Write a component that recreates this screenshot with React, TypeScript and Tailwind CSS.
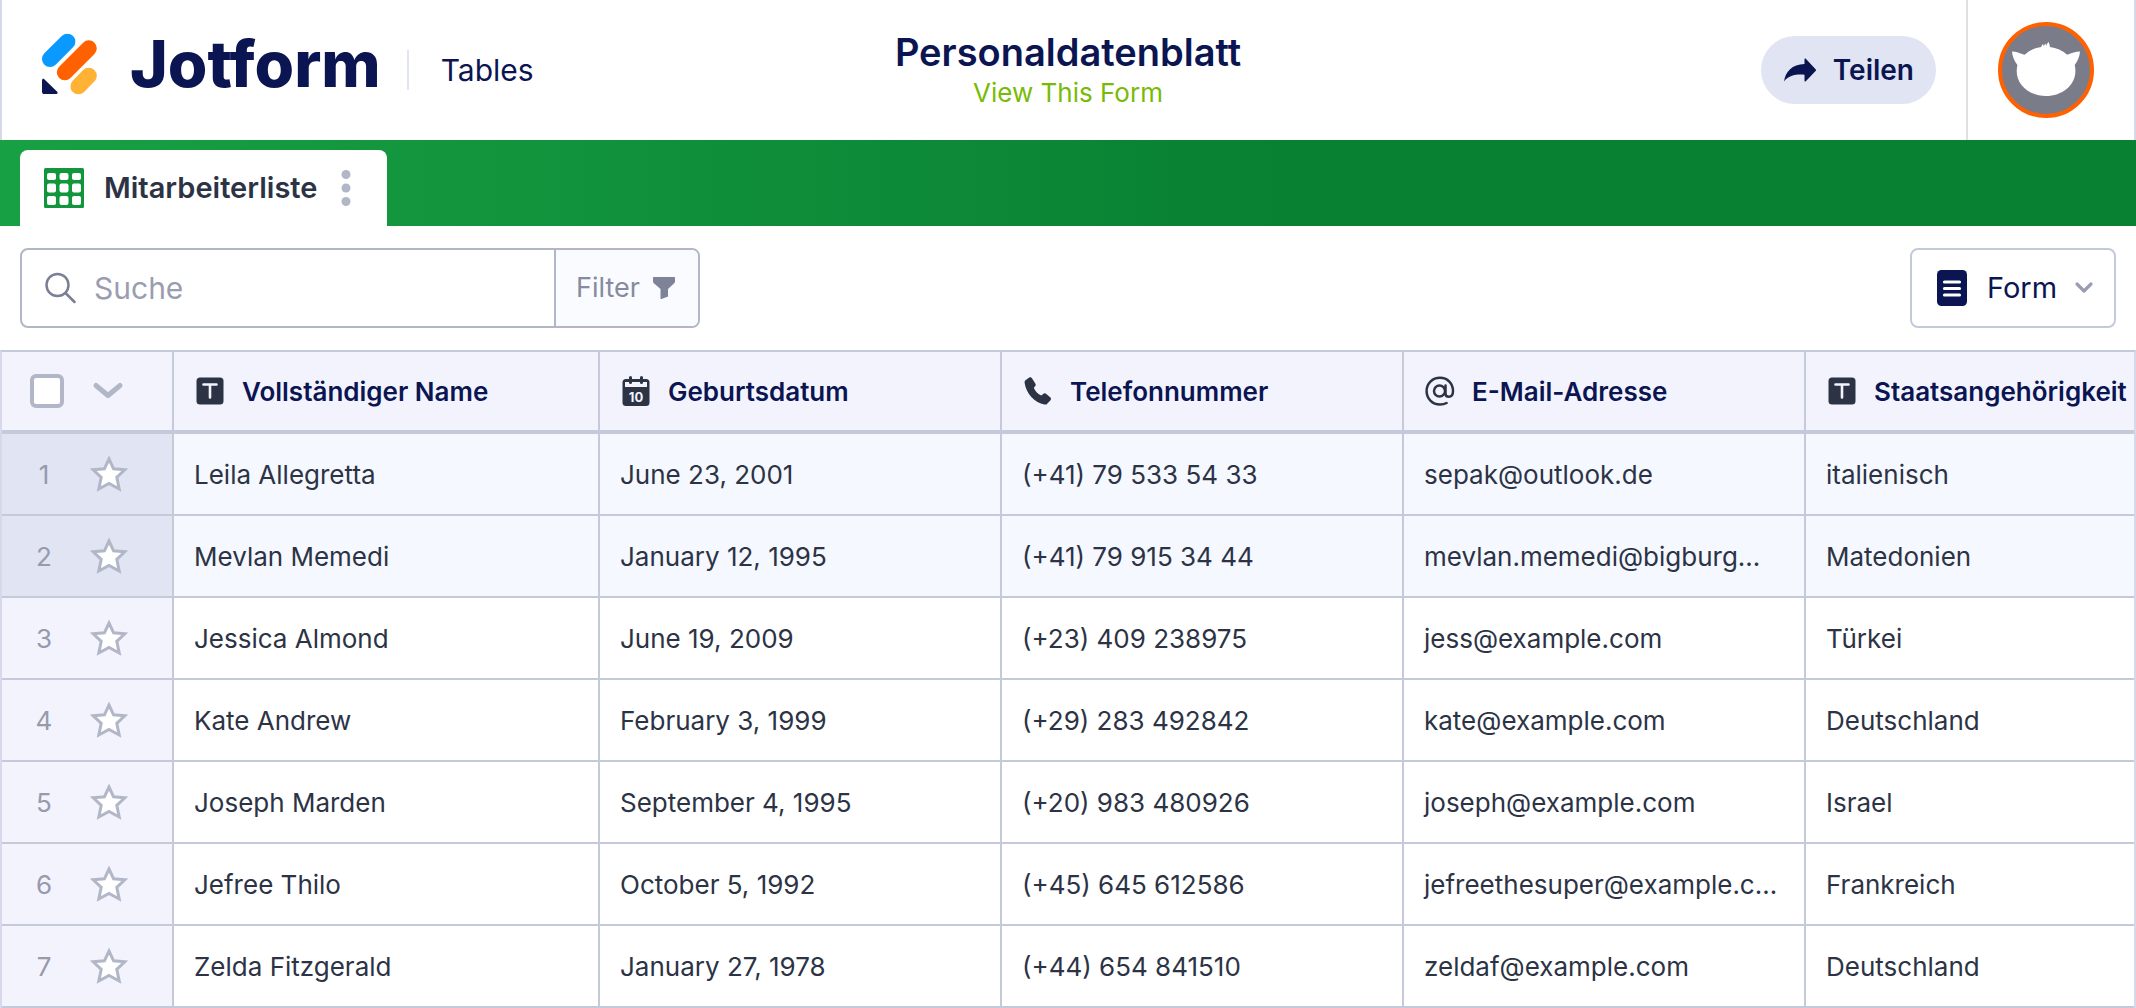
import type { ReactNode } from "react";

const columns = [
  { title: "Vollständiger Name", icon: <TextIcon />, width: "w-[426px]" },
  { title: "Geburtsdatum", icon: <CalendarIcon />, width: "w-[402px]" },
  { title: "Telefonnummer", icon: <PhoneIcon />, width: "w-[402px]" },
  { title: "E-Mail-Adresse", icon: <AtIcon />, width: "w-[402px]" },
  { title: "Staatsangehörigkeit", icon: <TextIcon />, width: "" },
];

const rows = [
  ["Leila Allegretta", "June 23, 2001", "(+41) 79 533 54 33", "sepak@outlook.de", "italienisch"],
  ["Mevlan Memedi", "January 12, 1995", "(+41) 79 915 34 44", "mevlan.memedi@bigburg…", "Matedonien"],
  ["Jessica Almond", "June 19, 2009", "(+23) 409 238975", "jess@example.com", "Türkei"],
  ["Kate Andrew", "February 3, 1999", "(+29) 283 492842", "kate@example.com", "Deutschland"],
  ["Joseph Marden", "September 4, 1995", "(+20) 983 480926", "joseph@example.com", "Israel"],
  ["Jefree Thilo", "October 5, 1992", "(+45) 645 612586", "jefreethesuper@example.c…", "Frankreich"],
  ["Zelda Fitzgerald", "January 27, 1978", "(+44) 654 841510", "zeldaf@example.com", "Deutschland"],
];

// Rows that are part of the current selection
const highlighted = [0, 1];

function ColumnIcon({ children }: { children: ReactNode }) {
  return (
    <svg viewBox="0 0 32 32" className="size-8 shrink-0" fill="#2c3345" aria-hidden="true">
      {children}
    </svg>
  );
}

function TextIcon() {
  return (
    <ColumnIcon>
      <rect x="2.5" y="2.5" width="27" height="27" rx="3.5" />
      <path d="M9.5 9.5h13M16 9.5v13" stroke="#f3f3fe" strokeWidth="2.6" strokeLinecap="round" />
    </ColumnIcon>
  );
}

function CalendarIcon() {
  return (
    <ColumnIcon>
      <rect x="2.5" y="4" width="27" height="27" rx="3.5" />
      <path d="M5 7h22v5H5z" fill="#f3f3fe" />
      <path d="M10.5 2.5v5M21.5 2.5v5" stroke="#2c3345" strokeWidth="3" strokeLinecap="round" />
      <text
        x="16"
        y="26.5"
        textAnchor="middle"
        fill="#f3f3fe"
        className="font-['Inter',sans-serif] text-[13px] font-bold"
      >
        10
      </text>
    </ColumnIcon>
  );
}

function PhoneIcon() {
  return (
    <ColumnIcon>
      <path d="M7.2 2.6 3.5 5.2c-.8.6-1 1.6-.9 2.6.8 5.3 3 10.2 6.7 14.1 3.8 4 8.3 6.6 13.2 7.6 1 .2 2 0 2.7-.8l3.3-3.5c.7-.8.7-2-.1-2.7l-4.3-3.8c-.8-.7-2-.7-2.7 0l-2 1.9c-1.8-.8-3.3-1.9-4.6-3.2-1.3-1.4-2.3-2.9-3-4.6l1.5-1.8c.6-.8.6-1.8 0-2.6L9.8 3c-.7-.8-1.8-1-2.6-.4Z" />
    </ColumnIcon>
  );
}

function AtIcon() {
  return (
    <ColumnIcon>
      <g fill="none" stroke="#2c3345" strokeWidth="2.5" strokeLinecap="round">
        <circle cx="15.5" cy="16" r="5.5" />
        <path d="M21.5 10.5v8c0 2.2 1.4 3.3 3.3 3.3 2.7 0 4.2-2.2 4.2-5.8C29 8.6 23.6 2.8 16 2.8S2.6 8.5 2.6 16 8.3 29.5 16 29.5c2.5 0 4.7-.5 6.6-1.5" />
      </g>
    </ColumnIcon>
  );
}

function Logo() {
  return (
    <svg viewBox="42 33 56 62" className="h-[62px] w-14" aria-hidden="true">
      <g strokeWidth="16" strokeLinecap="round">
        <path d="M50 59 67.4 41.7" stroke="#0a99ff" />
        <path d="M64.8 72.3 88.8 48.3" stroke="#ff6100" />
        <path d="M78.4 86.3 88.8 75.7" stroke="#ffb233" />
      </g>
      <path
        d="M42 80.5v11.2c0 1.4 1 2.3 2.3 2.3h12c1.3 0 1.8-1.3.9-2.2L44.3 79.2c-.9-.9-2.3-.2-2.3 1.3Z"
        fill="#0a1551"
      />
    </svg>
  );
}

function Avatar() {
  return (
    <svg viewBox="0 0 96 96" className="size-24" aria-hidden="true">
      <circle cx="48" cy="48" r="46" fill="#7b7c8a" stroke="#ff6100" strokeWidth="4" />
      <path
        d="M14 29.5c4 0 8 1.8 12.7 3.3 4.5-4.3 10-7 16.5-7.8.3-1.3.9-2.2 1.8-3l.8 2.3c.4-1.2.9-2 1.7-2.8l.6 2.6c.6-1.8 1.3-3 2.5-4.1.6 1.6 1.3 3.2 1.3 5 6.5.9 12.5 3.5 17.3 7.7 4.5-1.5 8.5-3.2 12.8-3.2-.3 5.5-2.5 9.5-5.3 13.5.5 1.9.7 3.9.7 6C77.4 63.5 64 74 48 74S18.7 63.5 18.7 49c0-2 .3-4 .7-5.9C16.5 39 14.3 35 14 29.5Z"
        fill="#fff"
      />
    </svg>
  );
}

function Star() {
  return (
    <svg viewBox="0 0 38 38" className="size-[38px]" aria-hidden="true">
      <path
        d="m19 4 4.6 9.8 11.2 1-8 7.5 2.4 11.7L19 28.5 8.8 34l2.4-11.7-8-7.5 11.2-1Z"
        fill="#fff"
        stroke="#b2b7c8"
        strokeWidth="3"
      />
    </svg>
  );
}

function Header() {
  return (
    <header className="grid h-[140px] grid-cols-[1fr_auto_1fr] border-x-2 border-[#d5d9ea] text-[#0a1551]">
      <div className="flex items-center pl-10">
        <a href="#" className="mb-3 flex items-center gap-8" aria-label="Jotform">
          <Logo />
          <span className="text-[64px] leading-[68px] font-extrabold">Jotform</span>
        </a>
        <span className="ml-[26px] h-10 w-[2px] bg-[#e0e4f3]" />
        <a href="#" className="ml-8 text-[30px]">
          Tables
        </a>
      </div>
      <div className="flex flex-col items-center pt-8">
        <h1 className="text-[38px] leading-[40px] font-semibold">Personaldatenblatt</h1>
        <a href="#" className="text-[26px] leading-[42px] text-[#78bb07]">
          View This Form
        </a>
      </div>
      <div className="flex items-center justify-end">
        <button className="mr-[30px] flex h-[68px] items-center gap-4 rounded-full bg-[#e0e4f3] px-[22px] text-[28px] font-semibold">
          <svg viewBox="0 0 34 26" className="h-[26px] w-[34px]" fill="#0a1551" aria-hidden="true">
            <path d="M1 24.5C2.5 14.5 9 7.500 21.500 7V2.200c0-.8.8-1 1.300-.5l10 10.700c.4.4.4.9 0 1.300l-10 10.500c-.5.5-1.300.3-1.300-.5v-6C12 17.200 6 18.500 1 24.500Z" />
          </svg>
          Teilen
        </button>
        <button className="flex h-full items-center border-l-2 border-[#e0e0e2] pr-10 pl-[30px]" aria-label="Konto">
          <Avatar />
        </button>
      </div>
    </header>
  );
}

function TabBar() {
  return (
    <nav className="flex h-[86px] items-end bg-linear-to-r from-[#18a044] to-[#088132] to-60% px-5">
      <div className="flex h-[76px] items-center rounded-t-lg bg-white pr-8 pl-6 text-[#2c3345]">
        <svg viewBox="0 0 40 40" className="size-10" aria-hidden="true">
          <rect width="40" height="40" rx="1.5" fill="#12963b" />
          <g fill="#fff">
            {[5, 15.5, 28].map((y, i) =>
              [3, 15.5, 28].map((x) => (
                <rect key={`${x}-${y}`} x={x} y={y} width="9" height={i === 0 ? 7 : 9} rx="2" />
              ))
            )}
          </g>
        </svg>
        <a href="#" className="ml-5 text-[29px] font-semibold">
          Mitarbeiterliste
        </a>
        <button className="ml-5 px-1" aria-label="Tab-Menü">
          <svg viewBox="0 0 10 38" className="h-[38px] w-[10px]" fill="#b2b7c8" aria-hidden="true">
            <circle cx="5" cy="5.5" r="4.5" />
            <circle cx="5" cy="19" r="4.5" />
            <circle cx="5" cy="32.5" r="4.5" />
          </svg>
        </button>
      </div>
    </nav>
  );
}

function Toolbar() {
  return (
    <div className="flex justify-between px-5 py-[22px]">
      <div className="flex h-20 w-[680px] rounded-lg border-2 border-[#b2b7c8]">
        <label className="flex min-w-0 flex-1 items-center gap-[18px] pl-[22px]">
          <svg
            viewBox="0 0 32 32"
            className="size-8 shrink-0"
            fill="none"
            stroke="#7b7f96"
            strokeWidth="2.5"
            aria-hidden="true"
          >
            <circle cx="13.5" cy="13" r="11" />
            <path d="m21.5 21 9 9" strokeLinecap="round" />
          </svg>
          <input
            type="search"
            aria-label="Suche"
            placeholder="Suche"
            className="w-full min-w-0 text-[30px] outline-none placeholder:text-[#9a9db0]"
          />
        </label>
        <button className="flex w-[144px] items-center gap-3 rounded-r-md border-l-2 border-[#b2b7c8] bg-[#fafbff] pl-5 text-[27px] text-[#868aa0]">
          Filter
          <svg viewBox="0 0 24 24" className="size-6" fill="#7f8399" aria-hidden="true">
            <path d="M2 1h20c.6 0 1 .4 1 1v3.5c0 .6-.2 1-.6 1.4L16 13v7.5L9.5 23c-.5.2-1-.1-1-.6V13L1.600 6.900C1.200 6.500 1 6.100 1 5.500V2c0-.6.4-1 1-1Z" />
          </svg>
        </button>
      </div>
      <label className="flex h-20 items-center gap-4 rounded-lg border-2 border-[#c5c9dc] pr-5 pl-[25px] text-[#0a1551]">
        <svg viewBox="0 0 30 36" className="mr-1 h-9 w-[30px]" aria-hidden="true">
          <rect width="30" height="36" rx="4.5" fill="#0a1551" />
          <path d="M7.5 12h15M7.5 18.5h15M7.5 25h15" stroke="#fff" strokeWidth="3.2" strokeLinecap="round" />
        </svg>
        <select aria-label="Ansicht" className="appearance-none text-[29px] outline-none">
          <option>Form</option>
        </select>
        <svg
          viewBox="0 0 20 20"
          className="size-5"
          fill="none"
          stroke="#9a9db0"
          strokeWidth="3.2"
          strokeLinecap="round"
          strokeLinejoin="round"
          aria-hidden="true"
        >
          <path d="m3 6 7 7 7-7" />
        </svg>
      </label>
    </div>
  );
}

function DataTable() {
  return (
    <table className="w-full table-fixed border-separate border-spacing-0 border-x-2 border-t-2 border-[#d5d9ea] border-t-[#c5cada] text-left text-[#2c3345]">
      <thead className="bg-[#f3f3fe] text-[#0a1551]">
        <tr>
          <th className="h-[82px] w-[172px] border-r-2 border-b-4 border-[#c5cada] p-0">
            <div className="flex items-center gap-7 pl-7">
              <input
                type="checkbox"
                aria-label="Alle auswählen"
                className="size-[34px] appearance-none rounded-md border-4 border-[#b2b7c8] bg-white"
              />
              <button aria-label="Auswahlmenü">
                <svg
                  viewBox="0 0 32 20"
                  className="h-5 w-8"
                  fill="none"
                  stroke="#b2b7c8"
                  strokeWidth="5"
                  strokeLinecap="round"
                  strokeLinejoin="round"
                  aria-hidden="true"
                >
                  <path d="m4 4.5 12 10 12-10" />
                </svg>
              </button>
            </div>
          </th>
          {columns.map((col) => (
            <th
              key={col.title}
              className={`${col.width} h-[82px] border-r-2 border-b-4 border-[#c5cada] p-0 pl-5 last:border-r-0`}
            >
              <div className="flex items-center gap-4 overflow-hidden text-[26px] font-semibold whitespace-nowrap">
                {col.icon}
                {col.title}
              </div>
            </th>
          ))}
        </tr>
      </thead>
      <tbody>
        {rows.map((row, i) => (
          <tr key={row[0]} className={highlighted.includes(i) ? "bg-[#f5f8ff]" : "bg-white"}>
            <th
              className={`h-[82px] border-r-2 border-b-2 border-[#c5cada] p-0 font-normal ${
                highlighted.includes(i) ? "bg-[#e0e4f3]" : "bg-[#f3f3fe]"
              }`}
            >
              <div className="flex items-center gap-1">
                <span className="w-[84px] text-center text-[26px] text-[#979aac]">{i + 1}</span>
                <button aria-label={`${row[0]} markieren`}>
                  <Star />
                </button>
              </div>
            </th>
            {row.map((cell, j) => (
              <td
                key={j}
                className="h-[82px] overflow-hidden border-r-2 border-b-2 border-[#c5cada] p-0 pl-5 text-[26px] whitespace-nowrap last:border-r-0"
              >
                {cell}
              </td>
            ))}
          </tr>
        ))}
      </tbody>
    </table>
  );
}

export default function App() {
  return (
    <div className="bg-white font-['Inter',sans-serif]">
      <Header />
      <TabBar />
      <Toolbar />
      <DataTable />
    </div>
  );
}
